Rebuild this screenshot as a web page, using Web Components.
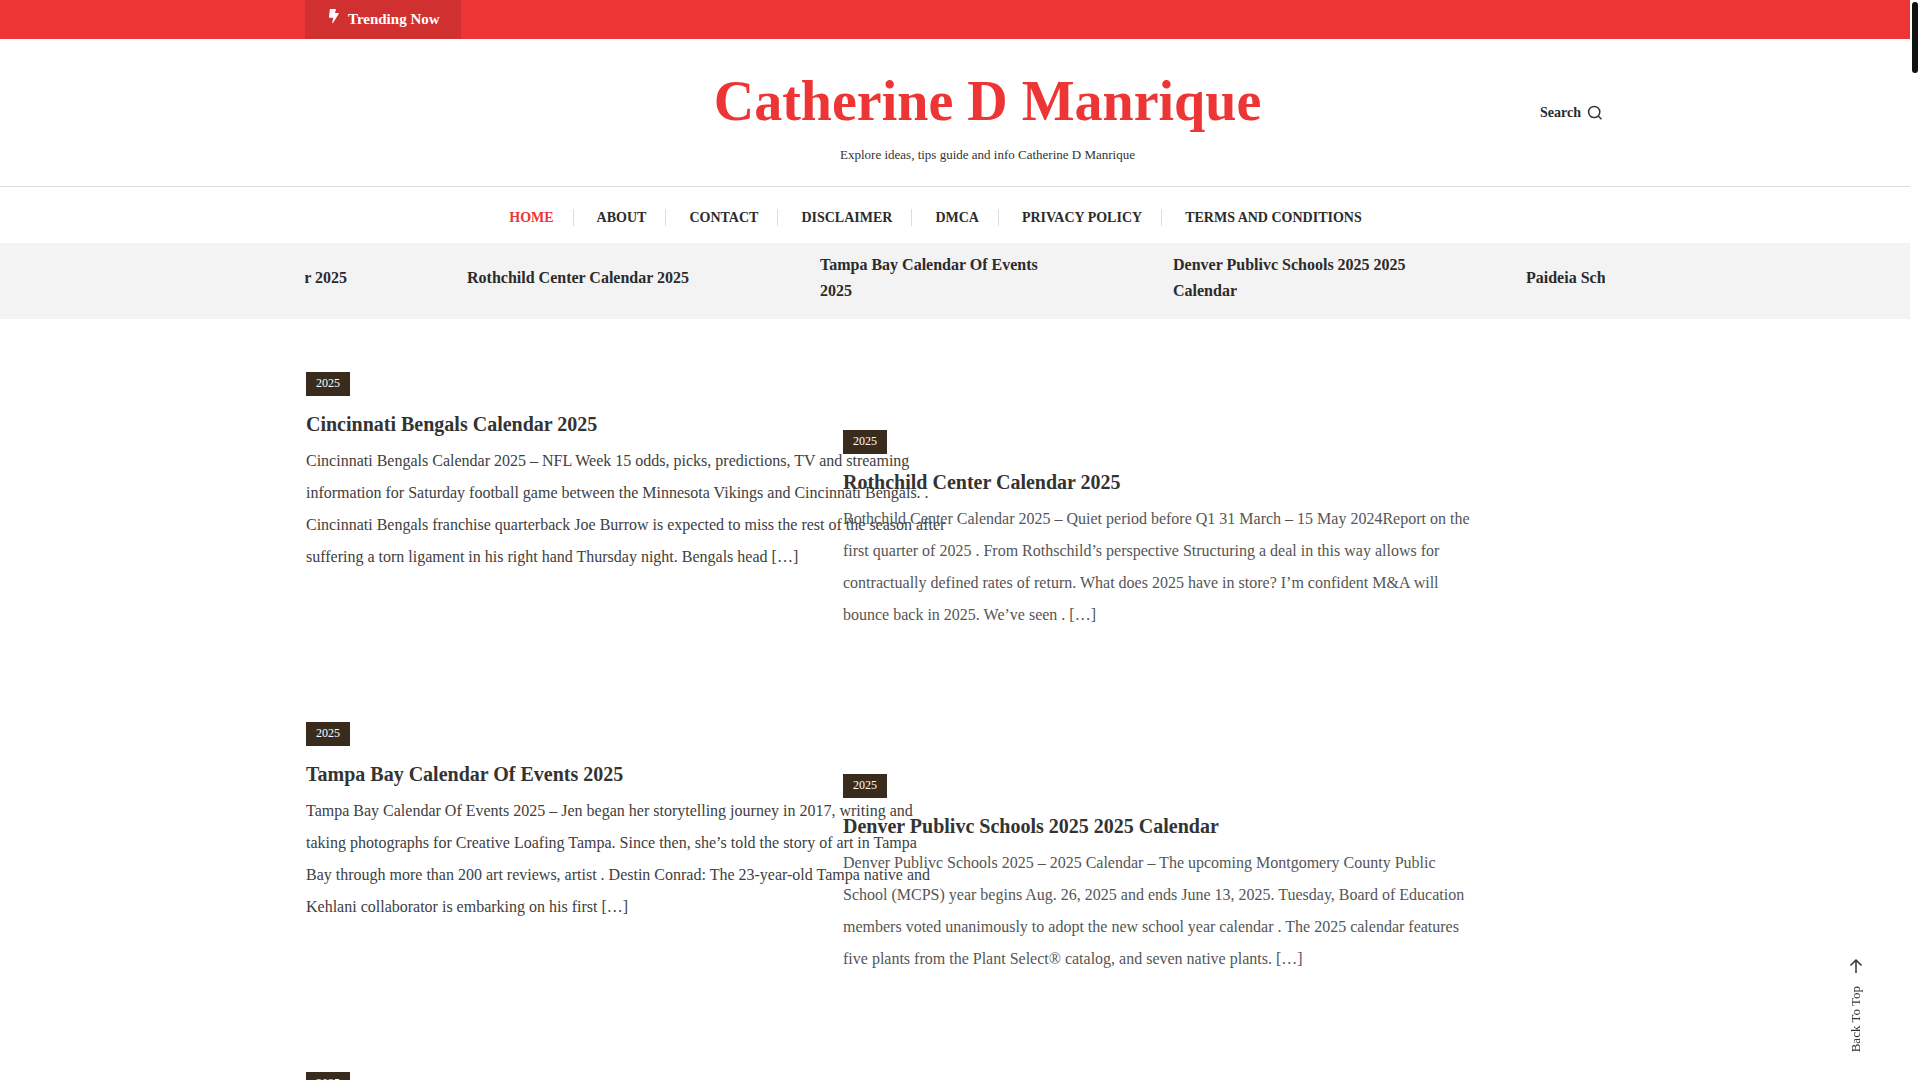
<!DOCTYPE html>
<html lang="en">
<head>
<meta charset="utf-8">
<title>Catherine D Manrique</title>
<style>
  body {
    margin: 0;
    padding-right: 10px;
    height: 100vh;
    box-sizing: border-box;
    overflow: hidden;
    background: #fff;
    color: #333;
    font-family: "Liberation Serif", "Times New Roman", serif;
    --accent: #ed3535;
    --container: 1300px;
  }
</style>
</head>
<body>
  <trending-bar>Trending Now</trending-bar>
  <site-header>
    <span slot="title">Catherine D Manrique</span>
    <span slot="tagline">Explore ideas, tips guide and info Catherine D Manrique</span>
  </site-header>
  <site-nav></site-nav>
  <news-ticker></news-ticker>
  <post-grid>
    <post-card slot="left" category="2025">
      <span slot="title">Cincinnati Bengals Calendar 2025</span>
      Cincinnati Bengals Calendar 2025 – NFL Week 15 odds, picks, predictions, TV and streaming information for Saturday football game between the Minnesota Vikings and Cincinnati Bengals. . Cincinnati Bengals franchise quarterback Joe Burrow is expected to miss the rest of the season after suffering a torn ligament in his right hand Thursday night. Bengals head […]
    </post-card>
    <post-card slot="left" category="2025">
      <span slot="title">Tampa Bay Calendar Of Events 2025</span>
      Tampa Bay Calendar Of Events 2025 – Jen began her storytelling journey in 2017, writing and taking photographs for Creative Loafing Tampa. Since then, she’s told the story of art in Tampa<br>
      Bay through more than 200 art reviews, artist . Destin Conrad: The 23-year-old Tampa native and Kehlani collaborator is embarking on his first […]
    </post-card>
    <post-card slot="left" category="2025"></post-card>
    <post-card slot="right" category="2025">
      <span slot="title">Rothchild Center Calendar 2025</span>
      Rothchild Center Calendar 2025 – Quiet period before Q1 31 March – 15 May 2024Report on the first quarter of 2025 . From Rothschild’s perspective Structuring a deal in this way allows for contractually defined rates of return. What does 2025 have in store? I’m confident M&amp;A will bounce back in 2025. We’ve seen . […]
    </post-card>
    <post-card slot="right" category="2025">
      <span slot="title">Denver Publivc Schools 2025 2025 Calendar</span>
      Denver Publivc Schools 2025 – 2025 Calendar – The upcoming Montgomery County Public<br>
      School (MCPS) year begins Aug. 26, 2025 and ends June 13, 2025. Tuesday, Board of Education members voted unanimously to adopt the new school year calendar . The 2025 calendar features five plants from the Plant Select® catalog, and seven native plants. […]
    </post-card>
  </post-grid>
  <back-to-top>Back To Top</back-to-top>
  <scroll-thumb></scroll-thumb>

<script>
class TrendingBar extends HTMLElement {
  connectedCallback() {
    this.attachShadow({ mode: 'open' });
    this.shadowRoot.innerHTML = `
      <style>
        :host { display: block; background: var(--accent); }
        .wrap { max-width: var(--container); margin: 0 auto; display: flex; }
        button {
          display: flex;
          align-items: flex-start;
          gap: 8px;
          height: 39px;
          padding: 8px 21px 0 23px;
          border: 0;
          background: #d03030;
          color: #fff;
          font-family: inherit;
          font-size: 15px;
          font-weight: bold;
          line-height: 22px;
        }
      </style>
      <div class="wrap">
        <button type="button">
          <svg width="12" height="16" viewBox="0 0 12 16" fill="#fff" aria-hidden="true">
            <path d="M2.300 1h5.100c.4 0 .6.3.5.7L7 5h3.300c.5 0 .7.4.5.800L5 15c-.3.500-.9.300-.8-.200L5.200 9.700H1.500c-.4 0-.6-.3-.5-.7L1.800 1.500C1.800 1.200 2 1 2.300 1z"/>
          </svg>
          <slot></slot>
        </button>
      </div>
    `;
  }
}

class SiteHeader extends HTMLElement {
  connectedCallback() {
    this.attachShadow({ mode: 'open' });
    this.shadowRoot.innerHTML = `
      <style>
        :host { display: block; border-bottom: 1px solid #ddd; }
        .wrap {
          max-width: var(--container);
          margin: 0 auto;
          padding: 28px 0 20px;
          display: grid;
          grid-template-columns: 10% 1fr 5%;
          align-items: center;
        }
        .brand { grid-column: 2; text-align: center; }
        h1 { margin: 0; font-size: 56px; line-height: 68px; }
        h1 a { color: var(--accent); text-decoration: none; }
        p { margin: 9px 0 0; font-size: 13px; line-height: 22px; }
        button {
          display: flex;
          align-items: center;
          gap: 6px;
          margin-bottom: 8px;
          padding: 0;
          border: 0;
          background: none;
          color: #2b2b2b;
          font-family: inherit;
          font-size: 14px;
          font-weight: bold;
          line-height: 22px;
        }
      </style>
      <div class="wrap">
        <div class="brand">
          <h1><a href="#"><slot name="title"></slot></a></h1>
          <p><slot name="tagline"></slot></p>
        </div>
        <button type="button">
          Search
          <svg width="16" height="16" viewBox="0 0 16 16" fill="none" stroke="#333" stroke-width="1.5" aria-hidden="true">
            <circle cx="7.2" cy="7" r="5.6"/>
            <path d="M11.2 11l3.300 3.300"/>
          </svg>
        </button>
      </div>
    `;
  }
}

class SiteNav extends HTMLElement {
  connectedCallback() {
    const items = ['Home', 'About', 'Contact', 'Disclaimer', 'DMCA', 'Privacy Policy', 'Terms And Conditions'];
    this.attachShadow({ mode: 'open' });
    this.shadowRoot.innerHTML = `
      <style>
        :host { display: block; }
        ul {
          display: flex;
          justify-content: center;
          gap: 23px;
          margin: 0;
          padding: 22px 0 17px;
          list-style: none;
        }
        li { padding-right: 19px; border-right: 1px solid #ddd; line-height: 16px; }
        li:last-child { padding-right: 39px; border: 0; }
        a {
          color: #2b2b2b;
          font-size: 14px;
          font-weight: bold;
          text-decoration: none;
          text-transform: uppercase;
        }
        a.current { color: var(--accent); }
      </style>
      <nav>
        <ul>${items.map((item, i) => `<li><a href="#"${i === 0 ? ' class="current"' : ''}>${item}</a></li>`).join('')}</ul>
      </nav>
    `;
  }
}

class NewsTicker extends HTMLElement {
  connectedCallback() {
    const posts = [
      'Cincinnati Bengals Calendar 2025',
      'Rothchild Center Calendar 2025',
      'Tampa Bay Calendar Of Events 2025',
      'Denver Publivc Schools 2025 2025 Calendar',
      'Paideia School Calendar 2025'
    ];
    this.attachShadow({ mode: 'open' });
    this.shadowRoot.innerHTML = `
      <style>
        :host { display: block; background: #f3f3f3; }
        .window { max-width: var(--container); margin: 0 auto; overflow: hidden; }
        .track {
          display: flex;
          align-items: center;
          gap: 113px;
          padding: 9px 0 15px;
          transform: translateX(-191px);
        }
        a {
          flex: 0 0 240px;
          color: #2b2b2b;
          font-size: 16px;
          font-weight: bold;
          line-height: 26px;
          text-decoration: none;
        }
      </style>
      <div class="window">
        <div class="track">${posts.map(post => `<a href="#">${post}</a>`).join('')}</div>
      </div>
    `;
  }
}

class PostGrid extends HTMLElement {
  connectedCallback() {
    this.attachShadow({ mode: 'open' });
    this.shadowRoot.innerHTML = `
      <style>
        :host { display: block; }
        .wrap {
          max-width: 1298px;
          margin: 0 auto;
          padding-top: 53px;
          display: grid;
          grid-template-columns: 537px 1fr;
        }
        .col { display: flex; flex-direction: column; gap: 149px; }
        .right { padding-top: 58px; gap: 143px; --excerpt: #555; }
      </style>
      <div class="wrap">
        <div class="col"><slot name="left"></slot></div>
        <div class="col right"><slot name="right"></slot></div>
      </div>
    `;
  }
}

class PostCard extends HTMLElement {
  connectedCallback() {
    this.attachShadow({ mode: 'open' });
    this.shadowRoot.innerHTML = `
      <style>
        :host { display: block; width: 642px; }
        .category {
          display: block;
          width: fit-content;
          padding: 0 10px 2px;
          background: #3a2c1d;
          color: #fff;
          font-size: 12px;
          line-height: 22px;
          text-decoration: none;
        }
        h2 { margin: 13px 0 6px; font-size: 20px; line-height: 30px; }
        h2 a { color: #333; text-decoration: none; }
        p { margin: 0; color: var(--excerpt, #404040); font-size: 16px; line-height: 32px; }
      </style>
      <article>
        <a class="category" href="#">${this.getAttribute('category')}</a>
        <h2><a href="#"><slot name="title"></slot></a></h2>
        <p><slot></slot></p>
      </article>
    `;
  }
}

class BackToTop extends HTMLElement {
  connectedCallback() {
    this.attachShadow({ mode: 'open' });
    this.shadowRoot.innerHTML = `
      <style>
        :host { position: fixed; right: 54px; bottom: 28px; }
        button {
          display: flex;
          flex-direction: column;
          align-items: center;
          gap: 12px;
          padding: 0;
          border: 0;
          background: none;
          color: #333;
          font-family: inherit;
          font-size: 13px;
          line-height: 20px;
        }
        span { writing-mode: vertical-rl; transform: rotate(180deg); }
      </style>
      <button type="button">
        <svg width="14" height="16" viewBox="0 0 14 16" fill="none" stroke="#333" stroke-width="1.5" aria-hidden="true">
          <path d="M7 15V2M1.500 7.500L7 2l5.500 5.500"/>
        </svg>
        <span><slot></slot></span>
      </button>
    `;
    this.shadowRoot.querySelector('button').addEventListener('click', () => {
      window.scrollTo({ top: 0, behavior: 'smooth' });
    });
  }
}

class ScrollThumb extends HTMLElement {
  connectedCallback() {
    this.attachShadow({ mode: 'open' });
    this.shadowRoot.innerHTML = `
      <style>
        :host {
          position: fixed;
          top: 2px;
          right: 2px;
          width: 6px;
          height: 71px;
          border-radius: 3px;
          background: #111;
        }
      </style>
    `;
  }
}

customElements.define('trending-bar', TrendingBar);
customElements.define('site-header', SiteHeader);
customElements.define('site-nav', SiteNav);
customElements.define('news-ticker', NewsTicker);
customElements.define('post-grid', PostGrid);
customElements.define('post-card', PostCard);
customElements.define('back-to-top', BackToTop);
customElements.define('scroll-thumb', ScrollThumb);
</script>
</body>
</html>
